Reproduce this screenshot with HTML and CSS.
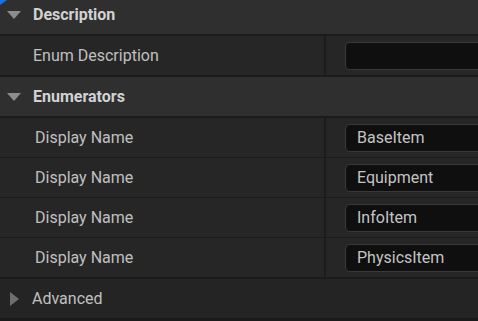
FILE: index.html
```html
<!DOCTYPE html>
<html>
<head>
<meta charset="utf-8">
<link rel="stylesheet" href="styles.css">
</head>
<body>
<div class="corner"></div>
<div class="panel">
  <div class="header first">
    <span class="tri-down"></span>
    <span class="htext">Description</span>
  </div>
  <div class="group">
    <div class="row">
      <div class="label">Enum Description</div>
      <div class="value"><div class="input"></div></div>
    </div>
  </div>
  <div class="header">
    <span class="tri-down"></span>
    <span class="htext">Enumerators</span>
  </div>
  <div class="group">
    <div class="row">
      <div class="label indent">Display Name</div>
      <div class="value"><div class="input">BaseItem</div></div>
    </div>
    <div class="row">
      <div class="label indent">Display Name</div>
      <div class="value"><div class="input">Equipment</div></div>
    </div>
    <div class="row">
      <div class="label indent">Display Name</div>
      <div class="value"><div class="input">InfoItem</div></div>
    </div>
    <div class="row">
      <div class="label indent">Display Name</div>
      <div class="value"><div class="input">PhysicsItem</div></div>
    </div>
  </div>
  <div class="header adv">
    <span class="tri-right"></span>
    <span class="atext">Advanced</span>
  </div>
</div>
</body>
</html>
```
FILE: styles.css
```css
html, body {
  margin: 0;
  padding: 0;
  background: #1b1b1b;
  overflow: hidden;
}
body {
  width: 478px;
  height: 321px;
  position: relative;
  font-family: Roboto, "Noto Sans", sans-serif;
  font-size: 16px;
  color: #c0c0c0;
}
.corner {
  position: absolute;
  left: 0;
  top: 0;
  width: 0;
  height: 0;
  border-top: 5px solid #1d6ff2;
  border-right: 7px solid transparent;
  z-index: 2;
}
.panel {
  display: flex;
  flex-direction: column;
  gap: 2px;
}
.header {
  height: 39px;
  background: #2f2f2f;
  display: flex;
  align-items: center;
}
.header.first {
  margin-top: -5px;
}
.header.adv {
  background: #242424;
}
.tri-down {
  width: 0;
  height: 0;
  border-left: 7px solid transparent;
  border-right: 7px solid transparent;
  border-top: 8px solid #8c8c8c;
  margin-left: 7px;
  margin-right: 12px;
}
.tri-right {
  width: 0;
  height: 0;
  border-top: 7px solid transparent;
  border-bottom: 7px solid transparent;
  border-left: 9px solid #6e6e6e;
  margin-left: 10px;
  margin-right: 13px;
}
.htext {
  font-weight: bold;
  color: #d2d2d2;
}
.atext {
  color: #c0c0c0;
}
.group {
  display: flex;
  flex-direction: column;
  gap: 1px;
}
.row {
  height: 39px;
  display: flex;
  gap: 2px;
}
.label {
  width: 291px;
  padding-left: 33px;
  background: #262626;
  display: flex;
  align-items: center;
}
.label.indent {
  padding-left: 35px;
  width: 289px;
}
.value {
  flex: 1;
  background: #262626;
  display: flex;
  align-items: center;
  padding-left: 19px;
}
.input {
  flex: 1;
  height: 26px;
  margin-right: -10px;
  background: #0f0f0f;
  border: 1px solid #3a3a3a;
  border-radius: 5px;
  display: flex;
  align-items: center;
  padding-left: 11px;
  color: #c4c4c4;
}
```
